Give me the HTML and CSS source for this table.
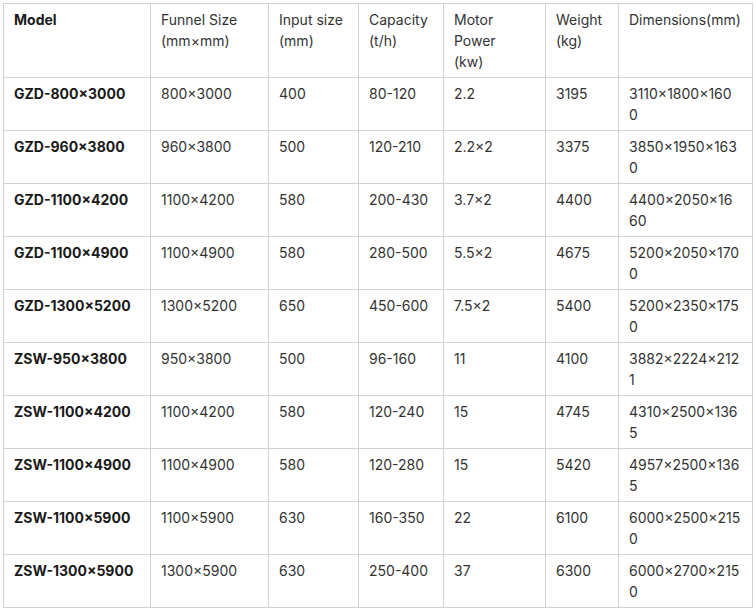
FILE: index.html
```html
<!DOCTYPE html>
<html>
<head>
<meta charset="utf-8">
<link rel="stylesheet" href="styles.css">
</head>
<body>
<table class="spec">
  <colgroup>
    <col class="c-model"><col class="c-funnel"><col class="c-input"><col class="c-cap"><col class="c-motor"><col class="c-weight"><col class="c-dim">
  </colgroup>
  <thead>
    <tr>
      <th class="model">Model</th>
      <th>Funnel Size <span class="unit">(mm×mm)</span></th>
      <th>Input size <span class="unit">(mm)</span></th>
      <th>Capacity <span class="unit">(t/h)</span></th>
      <th>Motor Power <span class="unit">(kw)</span></th>
      <th>Weight <span class="unit">(kg)</span></th>
      <th>Dimensions(mm)</th>
    </tr>
  </thead>
  <tbody>
    <tr><td class="model">GZD-800×3000</td><td>800×3000</td><td>400</td><td>80-120</td><td>2.2</td><td>3195</td><td class="dim">3110×1800×160<wbr>0</td></tr>
    <tr><td class="model">GZD-960×3800</td><td>960×3800</td><td>500</td><td>120-210</td><td>2.2×2</td><td>3375</td><td class="dim">3850×1950×163<wbr>0</td></tr>
    <tr><td class="model">GZD-1100×4200</td><td>1100×4200</td><td>580</td><td>200-430</td><td>3.7×2</td><td>4400</td><td class="dim">4400×2050×16<wbr>60</td></tr>
    <tr><td class="model">GZD-1100×4900</td><td>1100×4900</td><td>580</td><td>280-500</td><td>5.5×2</td><td>4675</td><td class="dim">5200×2050×170<wbr>0</td></tr>
    <tr><td class="model">GZD-1300×5200</td><td>1300×5200</td><td>650</td><td>450-600</td><td>7.5×2</td><td>5400</td><td class="dim">5200×2350×175<wbr>0</td></tr>
    <tr><td class="model">ZSW-950×3800</td><td>950×3800</td><td>500</td><td>96-160</td><td>11</td><td>4100</td><td class="dim">3882×2224×212<wbr>1</td></tr>
    <tr><td class="model">ZSW-1100×4200</td><td>1100×4200</td><td>580</td><td>120-240</td><td>15</td><td>4745</td><td class="dim">4310×2500×136<wbr>5</td></tr>
    <tr><td class="model">ZSW-1100×4900</td><td>1100×4900</td><td>580</td><td>120-280</td><td>15</td><td>5420</td><td class="dim">4957×2500×136<wbr>5</td></tr>
    <tr><td class="model">ZSW-1100×5900</td><td>1100×5900</td><td>630</td><td>160-350</td><td>22</td><td>6100</td><td class="dim">6000×2500×215<wbr>0</td></tr>
    <tr><td class="model">ZSW-1300×5900</td><td>1300×5900</td><td>630</td><td>250-400</td><td>37</td><td>6300</td><td class="dim">6000×2700×215<wbr>0</td></tr>
  </tbody>
</table>
</body>
</html>
```

FILE: styles.css
```css
html, body {
  margin: 0;
  padding: 0;
  background: #ffffff;
}
body {
  padding: 3px 0 0 3px;
  font-family: Inter, "Noto Sans", sans-serif;
  font-size: 14px;
  line-height: 21px;
  color: #333333;
}
.spec {
  border-collapse: separate;
  border-spacing: 0;
  table-layout: fixed;
  width: 750px;
  border-top: 1px solid #d2d2d2;
  border-left: 1px solid #d2d2d2;
}
.spec th,
.spec td {
  box-sizing: border-box;
  padding: 5px 10px;
  border-right: 1px solid #d2d2d2;
  border-bottom: 1px solid #d2d2d2;
  text-align: left;
  vertical-align: top;
  font-weight: 400;
  height: 53px;
}
.spec thead th {
  height: 74px;
}
.spec .unit {
  display: block;
}
.spec td.dim {
  padding-right: 18px;
}
.spec .model {
  font-weight: 700;
  color: #1a1a1a;
}
.c-model { width: 147px; }
.c-funnel { width: 118px; }
.c-input { width: 90px; }
.c-cap { width: 85px; }
.c-motor { width: 102px; }
.c-weight { width: 73px; }
.c-dim { width: 134px; }
```
